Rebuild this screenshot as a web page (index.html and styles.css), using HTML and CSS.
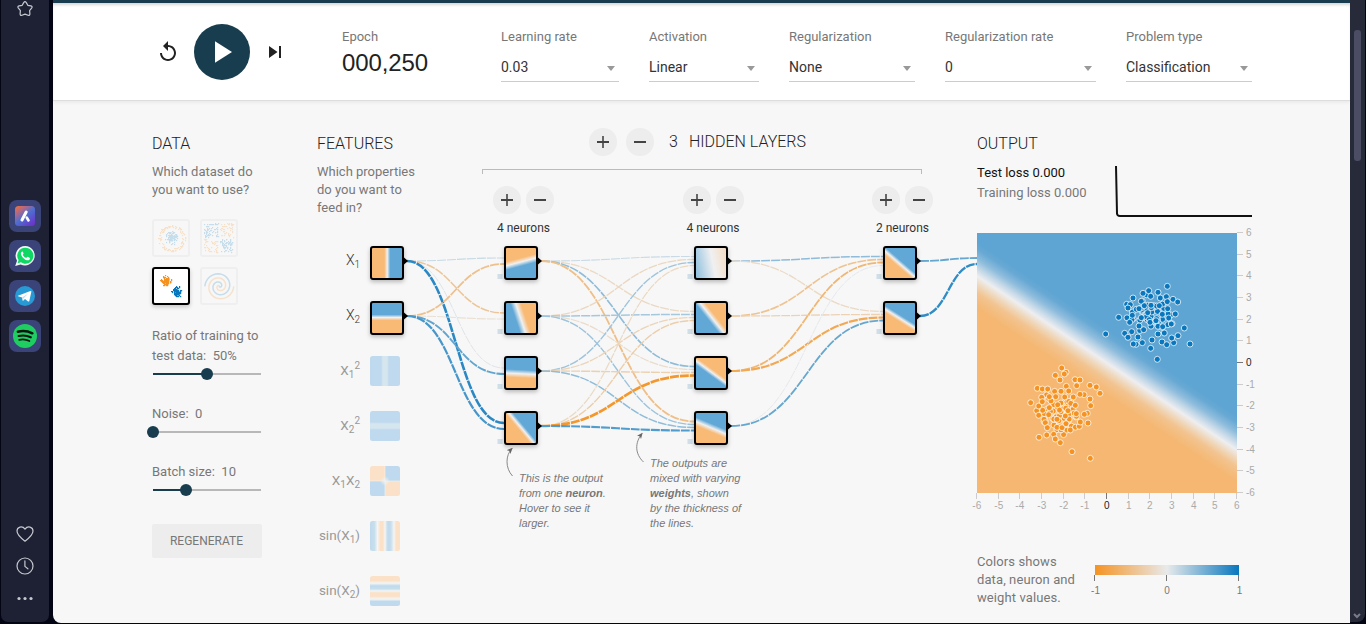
FILE: index.html
```html
<!DOCTYPE html>
<html lang="en">
<head>
<meta charset="utf-8">
<title>Neural Network Playground</title>
<link rel="stylesheet" href="styles.css">
</head>
<body>
<div class="browser">
  <aside class="sidebar">
    <svg class="line-icon star" viewBox="0 0 20 20"><path d="M8.7 2.6q1.3-1.9 2.6 0l1.500 2.700 3.100.6q2 .6.7 2.300l-2 2.400.3 3.200q0 2.100-1.900 1.400L10 14.100l-3 1.100q-1.900.7-1.900-1.400l.3-3.200-2-2.400q-1.300-1.700.7-2.300l3.100-.6z"/></svg>
    <nav class="apps">
      <span class="app"><svg viewBox="0 0 20 20"><defs><linearGradient id="aria" x1="0" y1="0" x2=".8" y2="1"><stop offset="0" stop-color="#f4702e"/><stop offset=".3" stop-color="#a9688f"/><stop offset=".55" stop-color="#4d6ed0"/><stop offset="1" stop-color="#6b35c9"/></linearGradient></defs><rect width="20" height="20" rx="3.500" fill="url(#aria)"/><path d="M11.200 6 7 14" stroke="#fff" stroke-width="3" stroke-linecap="round"/><path d="m11.700 11.500 1.800 3" stroke="#fff" stroke-width="2.600" stroke-linecap="round"/></svg></span>
      <span class="app"><svg viewBox="0 0 20 20"><path d="M10.300 0A9.700 9.700 0 0 0 2 14.700L.2 20l5.500-1.600A9.700 9.700 0 1 0 10.300 0z" fill="#f4f6f8"/><path d="M10.300 1.700a8 8 0 0 0-6.700 12.400l-1 3.200 3.300-1A8 8 0 1 0 10.300 1.700z" fill="#0ed763"/><path d="M7.100 5.400c-2.800 1.600-.4 5.500 2 7.400 2.400 1.900 5.200 2.200 5.800-.1.200-.8-.1-.9-2.100-1.900-.8-.3-.9 1.200-1.600 1-1.500-.5-2.700-1.700-3.300-2.900-.2-.6.900-1 .6-1.700-.6-1.500-.7-1.900-1.400-1.800z" fill="#fff"/></svg></span>
      <span class="app"><svg viewBox="0 0 20 20"><circle cx="10" cy="10" r="10" fill="#2799d4"/><path d="M3 9.800 15.400 5c.7-.2 1.100.2.900 1l-2 8.900c-.2.700-.6.900-1.200.5l-3.100-2.300-1.600 1.500c-.5.500-.8.300-.8-.3l-.6-2.900-3.900-1.200c-.6-.1-.6-.3-.1-.4z" fill="#fff"/><path d="m7 11.400 6.400-4-5 5-.3 2.300z" fill="#c4ddeb"/></svg></span>
      <span class="app"><svg class="wide" viewBox="0 0 24 24"><circle cx="12" cy="12" r="12" fill="#1fce60"/><g fill="none" stroke="#0a1711" stroke-linecap="round"><path d="M4.900 7.800q7.500-1.900 14.500 1.500" stroke-width="2.500"/><path d="M5.600 12q6.500-1.600 12.200 1.300" stroke-width="2.100"/><path d="M6.200 15.800q5.500-1.200 10.200 1.200" stroke-width="1.700"/></g></svg></span>
    </nav>
    <div class="tools">
      <svg class="line-icon" viewBox="0 0 20 20"><path d="M10 17.200C6.500 14.600 2 11 2 7.100 2 3 7.200 1.300 10 5.200 12.800 1.300 18 3 18 7.100c0 3.900-4.500 7.500-8 10.100z"/></svg>
      <svg class="line-icon" viewBox="0 0 20 20"><circle cx="10" cy="10" r="8"/><path d="M9.900 4.800v5.600l3 2.400"/></svg>
      <svg class="line-icon dots" viewBox="0 0 20 20"><circle cx="4" cy="10.500" r="1.600"/><circle cx="10" cy="10.500" r="1.600"/><circle cx="16" cy="10.500" r="1.600"/></svg>
    </div>
  </aside>

  <main class="page">
    <header class="controls">
      <svg class="reset" viewBox="0 0 24 24"><path d="M12 5V1L7 6l5 5V7c3.310 0 6 2.690 6 6s-2.690 6-6 6-6-2.690-6-6H4c0 4.420 3.580 8 8 8s8-3.580 8-8-3.580-8-8-8z"/></svg>
      <div class="play"><svg viewBox="0 0 36 36"><path d="M11 7.200v21.600L28 18z"/></svg></div>
      <svg class="step" viewBox="0 0 24 24"><path d="M6 18l8.500-6L6 6v12zM16 6v12h2V6h-2z"/></svg>
      <div class="epoch"><span class="label">Epoch</span><span class="count">000,250</span></div>
      <div class="field rate"><span class="label">Learning rate</span><span class="select">0.03</span></div>
      <div class="field activation"><span class="label">Activation</span><span class="select">Linear</span></div>
      <div class="field regular"><span class="label">Regularization</span><span class="select">None</span></div>
      <div class="field regular-rate"><span class="label">Regularization rate</span><span class="select">0</span></div>
      <div class="field problem"><span class="label">Problem type</span><span class="select">Classification</span></div>
    </header>

    <div class="columns">
      <section class="data">
        <h4>DATA</h4>
        <p>Which dataset do you want to use?</p>
        <div class="datasets">
          <svg class="thumb" id="circle" viewBox="0 0 34 34"></svg>
          <svg class="thumb" id="xor" viewBox="0 0 34 34"></svg>
          <svg class="thumb selected" id="gauss" viewBox="0 0 34 34"></svg>
          <svg class="thumb" id="spiral" viewBox="0 0 34 34"></svg>
        </div>
        <label class="ratio">Ratio of training to test data: &nbsp;50%</label>
        <div class="slider half"><i></i><b></b></div>
        <label>Noise: &nbsp;0</label>
        <div class="slider zero"><i></i><b></b></div>
        <label>Batch size: &nbsp;10</label>
        <div class="slider third"><i></i><b></b></div>
        <button class="regenerate">REGENERATE</button>
      </section>

      <section class="network">
        <div class="network-head">
          <div class="features">
            <h4>FEATURES</h4>
            <p>Which properties do you want to feed in?</p>
          </div>
          <div class="hidden-layers">
            <div class="layer-count">
              <span class="round plus"></span><span class="round"></span>
              <span class="number">3</span><span class="title">HIDDEN LAYERS</span>
            </div>
            <div class="bracket"></div>
            <div class="layers">
              <div class="layer"><div class="pair"><span class="round plus"></span><span class="round"></span></div>4 neurons</div>
              <div class="layer"><div class="pair"><span class="round plus"></span><span class="round"></span></div>4 neurons</div>
              <div class="layer"><div class="pair"><span class="round plus"></span><span class="round"></span></div>2 neurons</div>
            </div>
          </div>
        </div>
        <svg class="diagram" id="diagram" viewBox="317 240 660 383">
          <defs>
            <marker id="tip" markerWidth="8" markerHeight="8" refX="5" refY="3" orient="auto" markerUnits="userSpaceOnUse"><path d="M0 .3 6 3 0 5.700 1.500 3z" fill="#666"/></marker>
          </defs>
          <g id="links"></g>
          <g id="nodes"></g>
          <g class="feature-names">
            <text x="360" y="264.500">X<tspan class="sub" dy="3.500">1</tspan></text>
            <text x="360" y="319.500">X<tspan class="sub" dy="3.500">2</tspan></text>
            <g class="off">
              <text x="360" y="374.500">X<tspan class="sub" dy="3.500">1</tspan><tspan class="sub" dy="-9">2</tspan></text>
              <text x="360" y="429.500">X<tspan class="sub" dy="3.500">2</tspan><tspan class="sub" dy="-9">2</tspan></text>
              <text x="360" y="484.500">X<tspan class="sub" dy="3.500">1</tspan><tspan dy="-3.500">X</tspan><tspan class="sub" dy="3.500">2</tspan></text>
              <text x="360" y="539.500">sin(X<tspan class="sub" dy="3.500">1</tspan><tspan dy="-3.500">)</tspan></text>
              <text x="360" y="594.500">sin(X<tspan class="sub" dy="3.500">2</tspan><tspan dy="-3.500">)</tspan></text>
            </g>
          </g>
          <g class="callout">
            <path d="M512.500 476C505 468 505.500 455 512 448.500" marker-end="url(#tip)"/>
            <text x="519" y="481.500">This is the output</text>
            <text x="519" y="496.500">from one <tspan class="strong">neuron</tspan>.</text>
            <text x="519" y="511.500">Hover to see it</text>
            <text x="519" y="526.500">larger.</text>
            <path d="M643.500 462C635 454 634.500 443 642 433.500" marker-end="url(#tip)"/>
            <text x="650" y="467">The outputs are</text>
            <text x="650" y="482">mixed with varying</text>
            <text x="650" y="497"><tspan class="strong">weights</tspan>, shown</text>
            <text x="650" y="512">by the thickness of</text>
            <text x="650" y="527">the lines.</text>
          </g>
        </svg>
      </section>

      <section class="output">
        <h4>OUTPUT</h4>
        <div class="losses">
          <div><div class="test">Test loss 0.000</div><div class="train">Training loss 0.000</div></div>
          <svg class="chart" viewBox="0 0 138 54"><path d="M2 2 3 49.500Q3.200 52 6 52H138"/></svg>
        </div>
        <svg class="heatmap" id="heatmap" viewBox="977 225 290 290"></svg>
        <div class="legend">
          <p>Colors shows data, neuron and weight values.</p>
          <svg class="scale" viewBox="1085 553 165 54">
            <defs><linearGradient id="scale"><stop offset="0" stop-color="#f59322"/><stop offset=".5" stop-color="#e8eaeb"/><stop offset="1" stop-color="#0877bd"/></linearGradient></defs>
            <rect x="1095" y="565" width="144" height="10" fill="url(#scale)"/>
            <path d="M1094.500 575v6M1166.500 575v6M1238.500 575v6" stroke="#777"/>
            <g class="scale-text"><text x="1095.500" y="594">-1</text><text x="1167" y="594">0</text><text x="1239.500" y="594">1</text></g>
          </svg>
        </div>
      </section>
    </div>
  </main>
  <div class="scrollbar"><div class="bar"></div><svg class="down" viewBox="0 0 8 8"><path d="m1 2 3 3 3-3"/></svg></div>
</div>
<script src="script.js"></script>
</body>
</html>
```

FILE: styles.css
```css
* { box-sizing: border-box; }
body { margin: 0; background: #030514; font-family: Roboto, "Liberation Sans", sans-serif; font-size: 13px; color: #777; overflow: hidden; }
svg { display: block; }
h4, p { margin: 0; font-weight: 400; }
h4 { font-size: 16px; line-height: 20px; height: 20px; color: #222; font-weight: 300; }
p { line-height: 18px; margin-top: 9px; }

.browser { display: flex; width: 1366px; height: 624px; }

/* Browser sidebar */
.sidebar { width: 48px; height: 622px; margin: 0 4px 0 1px; background: #1e2133; border-radius: 0 0 7px 7px; display: flex; flex-direction: column; align-items: center; }
.line-icon { width: 20px; height: 20px; fill: none; stroke: #c6c8d0; stroke-width: 1.200; stroke-linecap: round; stroke-linejoin: round; }
.star { height: 20px; }
.apps { display: grid; gap: 8px; margin-top: 180px; }
.app { width: 32px; height: 32px; border-radius: 8px; background: #3a4478; display: flex; align-items: center; justify-content: center; }
.app svg { width: 20px; height: 20px; }
.app .wide { width: 24px; height: 24px; }
.tools { margin: 172px 1px 0 0; display: grid; gap: 12px; }
.dots { fill: #c6c8d0; stroke: none; }

/* Page */
.page { width: 1297px; height: 623px; background: #f7f7f7; border-bottom-left-radius: 8px; overflow: hidden; }
.controls { height: 101px; background: #fff; border-top: 3px solid #1a3c4f; border-bottom: 1px solid #ddd; box-shadow: 0 1px 4px rgba(0,0,0,.08), inset 0 3px 3px -1px rgba(0,0,0,.16); display: flex; padding-left: 103px; }
.reset { width: 24px; height: 24px; margin-top: 37px; fill: #222; }
.play { width: 56px; height: 56px; margin: 21px 0 0 14px; border-radius: 50%; background: #183d4e; display: grid; place-items: center; }
.play svg { width: 36px; height: 36px; fill: #fff; }
.step { width: 24px; height: 24px; margin: 37px 0 0 13px; fill: #222; }
.label { display: block; font-size: 13px; line-height: 18px; }
.epoch { width: 159px; margin: 25px 0 0 55px; }
.count { display: block; margin-top: 3px; font-size: 24px; line-height: 28px; color: #222; font-family: "Liberation Sans", sans-serif; letter-spacing: -.1px; }
.field { margin: 25px 30px 0 0; }
.select { display: flex; justify-content: space-between; align-items: center; margin-top: 8px; height: 28px; font-size: 14px; color: #333; border-bottom: 1px solid #ccc; padding: 0 4px 1px 0; }
.select::after { content: ""; border: 4.500px solid transparent; border-top: 5px solid #999; border-bottom: 0; margin-top: 2px; }
.rate { width: 118px; }
.activation { width: 110px; }
.regular { width: 126px; }
.regular-rate { width: 151px; }
.problem { width: 126px; }

.columns { display: flex; padding-left: 99px; }

/* Data column */
.data { width: 165px; padding: 33px 55px 0 0; }
.data p { width: 112px; }
.datasets { display: grid; grid-template-columns: 38px 38px; gap: 10px; margin-top: 20px; }
.thumb { width: 38px; height: 38px; border: 2px solid #efefef; border-radius: 3px; }
.thumb g { opacity: .2; }
.selected { border-color: #000; background: #fff; box-shadow: 0 2px 4px rgba(0,0,0,.2); }
.selected g { opacity: 1; }
.data label { display: block; line-height: 20px; white-space: nowrap; margin-top: 24px; }
.data .ratio { margin-top: 21px; width: 120px; white-space: normal; }
.slider { position: relative; display: flex; align-items: center; width: 108px; height: 12px; margin: 2px 0 0 1px; background: linear-gradient(#b8b8b8, #b8b8b8) 0 5px / 100% 2px no-repeat; }
.slider i { height: 2px; background: #183d4e; }
.slider b { width: 12px; height: 12px; border-radius: 50%; background: #183d4e; margin-left: -6px; }
.half i { width: 54px; }
.zero i { width: 0; }
.third i { width: 33px; }
.regenerate { display: block; width: 110px; height: 34px; margin-top: 28px; padding: 0 1px 0 0; border: 0; border-radius: 2px; background: #ededed; color: #777; font: 400 12px Roboto, sans-serif; }

/* Network */
.network { width: 660px; }
.network-head { display: flex; height: 139px; }
.features { width: 165px; padding-top: 33px; }
.features p { width: 100px; }
.hidden-layers { width: 495px; padding-top: 27px; color: #333; }
.layer-count { display: flex; align-items: center; gap: 9px; padding-left: 107px; font-size: 16px; font-weight: 300; color: #222; }
.number { margin: 0 2px 1px 6px; }
.title { margin-bottom: 1px; }
.round { width: 28px; height: 28px; border-radius: 50%; background: linear-gradient(#444, #444) center / 12px 2px no-repeat #ededed; }
.plus { background: linear-gradient(#444, #444) center / 12px 2px no-repeat, linear-gradient(#666, #666) center / 2px 12px no-repeat #ededed; }
.bracket { width: 440px; height: 5px; margin-top: 13px; border: 1px solid #bbb; border-bottom: 0; }
.layers { display: flex; gap: 128.500px; padding-left: 11px; margin-top: 12px; }
.layer { width: 61px; text-align: center; font-size: 12px; line-height: 16px; }
.pair { display: flex; gap: 5px; margin-bottom: 6px; }
.diagram { width: 660px; height: 383px; }
.box { filter: drop-shadow(0 2px 2px rgba(0,0,0,.25)); }
.feature-names { font-size: 14px; text-anchor: end; fill: #333; font-weight: 300; }
.feature-names .off { font-size: 13.500px; fill: #999; font-weight: 400; }
.sub { font-size: 10px; }
.callout { font: italic 11px "Liberation Sans", sans-serif; fill: #777; }
.callout path { fill: none; stroke: #888; }
.callout marker path { fill: #666; }
.strong { font-weight: 700; }

/* Output */
.output { width: 290px; padding-top: 33px; }
.losses { display: flex; margin-top: 9px; line-height: 20px; }
.losses > div { width: 137px; }
.test { color: #111; }
.chart { width: 138px; height: 54px; margin-top: 1px; }
.chart path { fill: none; stroke: #111; stroke-width: 2; }
.heatmap { width: 290px; height: 290px; margin-top: 7px; overflow: visible; }
.axis text { font: 10px "Liberation Sans", sans-serif; fill: #aaa; }
.axis .origin { fill: #222; }
.legend { display: flex; margin-top: 38px; }
.legend p { width: 108px; padding-right: 6px; margin: 0; letter-spacing: .1px; }
.scale { width: 165px; height: 54px; }
.scale-text { font: 10px "Liberation Sans", sans-serif; fill: #777; text-anchor: middle; }

/* Scrollbar */
.scrollbar { width: 15px; height: 622px; background: #272a38; border-bottom-right-radius: 8px; position: relative; }
.bar { width: 7px; height: 131px; margin: 30px 0 0 4px; border-radius: 3px; background: #4a4d63; }
.down { position: absolute; left: 3px; top: 612px; width: 8px; height: 8px; fill: none; stroke: #777b8a; stroke-width: 2; }
```

FILE: script.js
```js
const BLUE = '#61a8d6', ORANGE = '#f8ba75', MID = '#f0f0f1';
const $ = id => document.getElementById(id);

let seed = 7;
function rand() { seed = (seed * 16807) % 2147483647; return seed / 2147483647; }
function normal() { let s = 0; for (let i = 0; i < 6; i++) s += rand(); return (s - 3) * 1.414; }

function weightColor(w) {
  const from = [232, 234, 235], to = w < 0 ? [245, 147, 34] : [8, 119, 189];
  const t = Math.min(1, Math.abs(w));
  return 'rgb(' + from.map((c, i) => Math.round(c + (to[i] - c) * t)) + ')';
}

// Links: [x1, y1, x2, y2, weight, width]
const rows = [261, 316, 371, 426];
const links = [];
function connect(x1, x2, matrix) {
  const n = matrix.length;
  matrix.forEach((outs, i) => outs.forEach(([w, width], j) => {
    links.push([x1, rows[i], x2, rows[j] + (i - (n - 1) / 2) / n * 12, w, width]);
  }));
}
connect(407, 504, [
  [[.15, 1.1], [-.42, 1.5], [.04, 1], [.85, 2.6]],
  [[-.48, 1.8], [-.12, 1.1], [.6, 1.9], [.72, 2.200]]
]);
connect(541, 694, [
  [[.14, 1.1], [-.2, 1.3], [.4, 1.6], [-.5, 1.8]],
  [[-.22, 1.3], [.3, 1.500], [-.16, 1.2], [.34, 1.4]],
  [[.33, 1.4], [-.25, 1.3], [-.3, 1.4], [.4, 1.500]],
  [[-.2, 1.2], [-.32, 1.4], [-.95, 2.7], [.68, 2.1]]
]);
connect(731, 883, [
  [[.4, 1.5], [-.2, 1.3]],
  [[-.45, 1.6], [-.28, 1.3]],
  [[-.6, 1.8], [-.75, 2.2]],
  [[.01, 1], [.58, 1.8]]
]);
links.push([920, 261, 977, 258, .58, 1.8], [920, 316, 977, 264, .82, 2.3]);
$('links').innerHTML = links.map(([a, b, c, d, w, width]) => {
  const m = (a + c) / 2;
  return `<path d="M${a} ${b}C${m} ${b} ${m} ${d} ${c} ${d}" fill="none" stroke="${weightColor(w)}" stroke-width="${width}" stroke-dasharray="9 1"/>`;
}).join('');

// Gradient across the boundary line p-q, from colour a to colour b.
let gid = 0;
function boundary(x0, y0, p, q, a, b, half) {
  const dx = q[0] - p[0], dy = q[1] - p[1], len = Math.hypot(dx, dy);
  const nx = -dy / len * half, ny = dx / len * half;
  const cx = x0 + (p[0] + q[0]) / 2, cy = y0 + (p[1] + q[1]) / 2;
  const id = 'g' + gid++;
  return [id, `<linearGradient id="${id}" gradientUnits="userSpaceOnUse" x1="${cx - nx}" y1="${cy - ny}" x2="${cx + nx}" y2="${cy + ny}"><stop offset="0" stop-color="${a}"/><stop offset=".5" stop-color="${MID}"/><stop offset="1" stop-color="${b}"/></linearGradient>`];
}
const nodes = [
  [370, 246, [15.300, 30], [15.300, 0], ORANGE, BLUE, 3],
  [370, 301, [0, 14.500], [30, 14.500], BLUE, ORANGE, 3],
  [504, 246, [0, 18], [30, 10], ORANGE, BLUE, 4],
  [504, 301, [19.500, 30], [9.500, 0], BLUE, ORANGE, 5],
  [504, 356, [0, 15], [30, 16.500], BLUE, ORANGE, 4],
  [504, 411, [28, 30], [3, 0], ORANGE, BLUE, 3],
  [694, 246, [20, 30], [14, 0], '#94c3df', '#f5d9bb', 18],
  [694, 301, [28, 30], [4, 0], BLUE, ORANGE, 4],
  [694, 356, [30, 25], [0, 3], BLUE, ORANGE, 3],
  [694, 411, [0, 8.500], [30, 21], BLUE, ORANGE, 4],
  [883, 246, [0, 3], [30, 29], BLUE, ORANGE, 3],
  [883, 301, [0, 6], [30, 25], BLUE, ORANGE, 3]
];
let out = '';
nodes.forEach(([x, y, p, q, a, b, half]) => {
  const [id, def] = boundary(x + 2, y + 2, p, q, a, b, half);
  if (x > 400) out += `<rect x="${x - 6.500}" y="${y + 28}" width="5" height="5" fill="#cfdee7"/>`;
  out += `${def}<rect class="box" x="${x + 1}" y="${y + 1}" width="32" height="32" rx="2" fill="url(#${id})" stroke="#000" stroke-width="2"/>`;
  out += `<path d="M${x + 34} ${y + 11.500}l4 3.500-4 3.500z"/>`;
});

// Disabled features
function stops(id, vertical, list) {
  return `<linearGradient id="${id}" ${vertical ? 'x2="0" y2="1"' : ''}>` +
    list.map(([o, c]) => `<stop offset="${o}" stop-color="${c}"/>`).join('') + '</linearGradient>';
}
const PB = '#bfdaee', PO = '#fbe1c7', PM = '#f4f5f5';
const square = [[0, PB], [.37, PB], [.43, '#d6e6ee'], [.57, '#d6e6ee'], [.63, PB], [1, PB]];
out += stops('sq1', false, square) + stops('sq2', true, square);
out += stops('sin1', false, [[0, PB], [.15, '#c8dfec'], [.25, PM], [.35, PO], [.43, PO], [.5, PM], [.57, '#c8dfec'], [.63, PB], [.7, '#c8dfec'], [.8, PM], [.87, PO], [1, PO]]);
out += stops('sin2', true, [[0, PO], [.15, PO], [.24, PM], [.33, PB], [.43, '#c8dfec'], [.5, PM], [.56, PO], [.67, PO], [.77, PM], [.85, PB], [1, PB]]);
[['sq1', 356], ['sq2', 411], ['sin1', 521], ['sin2', 576]].forEach(([id, y]) => {
  out += `<rect x="370" y="${y}" width="30" height="30" rx="2.500" fill="url(#${id})"/>`;
});
out += `<clipPath id="cx"><rect x="370" y="466" width="30" height="30" rx="2.500"/></clipPath><radialGradient id="soft"><stop offset="0" stop-color="#f0f1f1"/><stop offset="1" stop-color="#f0f1f1" stop-opacity="0"/></radialGradient>
<g clip-path="url(#cx)"><path fill="${PO}" d="M370 466h15v15h-15zM385 481h15v15h-15z"/><path fill="${PB}" d="M385 466h15v15h-15zM370 481h15v15h-15z"/><path stroke="${PM}" opacity=".6" d="M385 466v30M370 481h30"/><circle cx="385" cy="481" r="5" fill="url(#soft)"/></g>`;
$('nodes').innerHTML = out;

// Dataset thumbnails
function dots(id, pts) {
  $(id).innerHTML = '<g>' + pts.map(([x, y, blue]) => `<rect x="${Math.round(x)}" y="${Math.round(y)}" width="1.200" height="1.200" fill="${blue ? '#0877bd' : '#f59322'}"/>`).join('') + '</g>';
}
let pts = [];
for (let i = 0; i < 130; i++) {
  let a = rand() * 6.283, r = rand() * 7;
  pts.push([17 + r * Math.cos(a), 17 + r * Math.sin(a), true]);
  a = rand() * 6.283; r = 10.500 + rand() * 3;
  pts.push([17.500 + r * Math.cos(a), 17 + r * Math.sin(a), false]);
}
dots('circle', pts);
pts = [];
for (let i = 0; i < 280; i++) {
  const x = 2 + rand() * 29, y = 2 + rand() * 29;
  if (Math.abs(x - 17) > 1 && Math.abs(y - 17) > 1) pts.push([x, y, (x < 17) === (y < 17)]);
}
dots('xor', pts);
pts = [];
for (let i = 0; i < 110; i++) {
  pts.push([11.500 + normal() * 2.100, 11.200 + normal() * 2, false]);
  pts.push([22.700 + normal() * 2.200, 22.500 + normal() * 2, true]);
}
dots('gauss', pts);
function spiral(phase) {
  let d = '';
  for (let i = 0; i <= 60; i++) {
    const r = i / 60 * 14.500, t = 1.750 * i / 60 * 2 * Math.PI + phase;
    d += (i ? 'L' : 'M') + (17.300 + r * Math.sin(t)).toFixed(1) + ' ' + (17.300 + r * Math.cos(t)).toFixed(1);
  }
  return d;
}
$('spiral').innerHTML = `<g fill="none" stroke-width="1.500"><path stroke="#f59322" d="${spiral(Math.PI)}"/><path stroke="#0877bd" d="${spiral(0)}"/></g>`;

// Output heatmap, axes and samples
let h = '<linearGradient id="field" gradientUnits="userSpaceOnUse" x1="1091.400" y1="386.300" x2="1122.600" y2="339.700">' +
  [[0, '#f5b771'], [.1, '#f4bb7b'], [.25, '#f2c490'], [.38, '#efd9bf'], [.5, '#eeeef0'], [.62, '#c3d8e7'], [.75, '#8fbddc'], [.9, '#68a9d4'], [1, '#5fa5d3']]
    .map(([o, c]) => `<stop offset="${o}" stop-color="${c}"/>`).join('') + '</linearGradient>';
h += '<rect x="977" y="233" width="260" height="260" fill="url(#field)"/><g class="axis">';
for (let v = -6; v <= 6; v++) {
  const p = (v + 6) * 21.667, x = Math.min(1236.500, Math.round(976 + p) + .5), y = Math.round(492 - p) + .5, c = v ? '#ccc' : '#777', k = v ? '' : ' class="origin"';
  h += `<path stroke="${c}" d="M${x} 493v6M1237 ${y}h6"/><text${k} text-anchor="middle" x="${x + .3}" y="509">${v}</text><text${k} x="1246" y="${y + 3.500}">${v}</text>`;
}
h += '</g>';
const cloud = (list, cx, cy, count, color) => {
  const all = [];
  while (all.length < count) {
    const dx = normal() * 11.500, dy = normal() * 11.500;
    if (Math.hypot(dx, dy) < 24) all.push([cx + dx, cy + dy]);
  }
  list.forEach(([x, y]) => all.push([960 + x / 3, 220 + y / 3]));
  h += all.map(([x, y]) => `<circle cx="${x.toFixed(1)}" cy="${y.toFixed(1)}" r="3" fill="${color}" stroke="#fff" stroke-opacity=".75"/>`).join('');
};
cloud([[318, 457], [305, 444], [313, 462], [286, 466], [300, 480], [345, 479], [360, 480], [350, 497], [390, 496], [409, 501], [420, 520], [232, 505], [247, 507], [263, 507], [245, 532], [212, 548], [230, 572], [236, 586], [236, 558], [247, 545], [248, 571], [268, 530], [268, 563], [266, 584], [252, 598], [256, 608], [262, 623], [237, 652], [260, 645], [281, 643], [286, 657], [301, 668], [336, 695], [391, 715], [384, 609], [382, 580], [373, 583], [358, 619], [361, 606], [331, 630], [392, 557], [390, 537], [372, 524], [360, 523], [340, 531], [319, 499], [303, 514], [326, 513], [291, 622], [306, 623], [318, 611], [291, 598], [316, 588], [349, 581], [346, 556], [324, 572], [287, 530], [314, 531]], 1062, 411, 48, '#f59322');
cloud([[622, 199], [566, 212], [594, 217], [549, 220], [519, 234], [572, 229], [619, 230], [601, 234], [639, 238], [653, 246], [622, 245], [544, 244], [500, 253], [511, 254], [504, 264], [476, 292], [437, 342], [517, 286], [509, 307], [494, 340], [504, 352], [515, 335], [528, 373], [520, 372], [547, 368], [534, 351], [572, 385], [592, 418], [606, 366], [620, 374], [641, 368], [635, 354], [654, 347], [690, 372], [673, 324], [634, 312], [646, 282], [626, 294], [623, 266], [598, 257], [573, 256], [553, 257], [537, 266], [607, 283], [563, 278], [544, 293], [570, 307], [588, 302], [537, 318], [551, 329], [594, 319], [608, 320], [613, 339], [594, 342], [576, 360]], 1150, 318, 45, '#0877bd');
$('heatmap').innerHTML = h;
```
